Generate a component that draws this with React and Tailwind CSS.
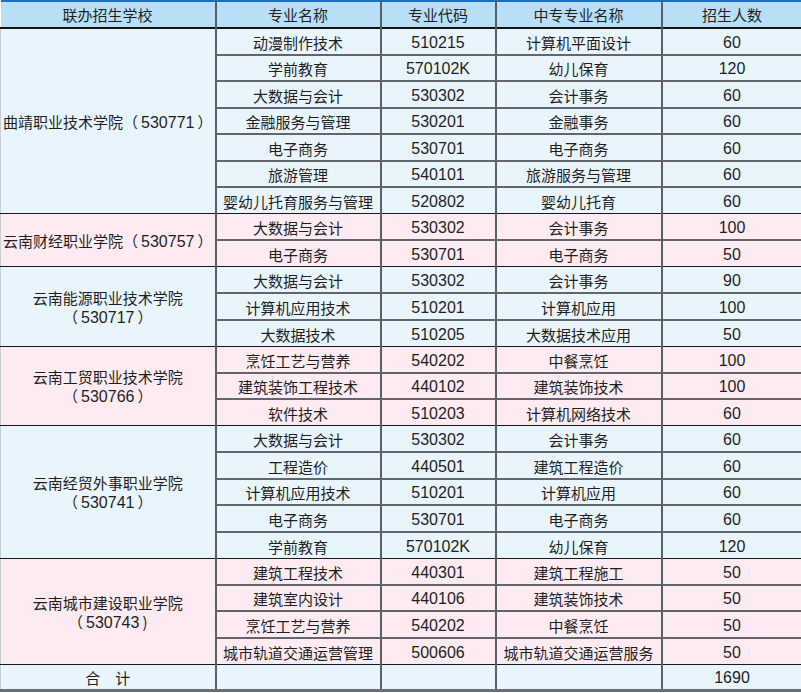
import React from "react";

const schools = [
  {
    name: [["曲靖职业技术学院（", "530771", "）"]],
    tone: "blue",
    rows: [
      ["动漫制作技术", "510215", "计算机平面设计", "60"],
      ["学前教育", "570102K", "幼儿保育", "120"],
      ["大数据与会计", "530302", "会计事务", "60"],
      ["金融服务与管理", "530201", "金融事务", "60"],
      ["电子商务", "530701", "电子商务", "60"],
      ["旅游管理", "540101", "旅游服务与管理", "60"],
      ["婴幼儿托育服务与管理", "520802", "婴幼儿托育", "60"],
    ],
  },
  {
    name: [["云南财经职业学院（", "530757", "）"]],
    tone: "pink",
    rows: [
      ["大数据与会计", "530302", "会计事务", "100"],
      ["电子商务", "530701", "电子商务", "50"],
    ],
  },
  {
    name: [["云南能源职业技术学院", "", ""], ["（", "530717", "）"]],
    tone: "blue",
    rows: [
      ["大数据与会计", "530302", "会计事务", "90"],
      ["计算机应用技术", "510201", "计算机应用", "100"],
      ["大数据技术", "510205", "大数据技术应用", "50"],
    ],
  },
  {
    name: [["云南工贸职业技术学院", "", ""], ["（", "530766", "）"]],
    tone: "pink",
    rows: [
      ["烹饪工艺与营养", "540202", "中餐烹饪", "100"],
      ["建筑装饰工程技术", "440102", "建筑装饰技术", "100"],
      ["软件技术", "510203", "计算机网络技术", "60"],
    ],
  },
  {
    name: [["云南经贸外事职业学院", "", ""], ["（", "530741", "）"]],
    tone: "blue",
    rows: [
      ["大数据与会计", "530302", "会计事务", "60"],
      ["工程造价", "440501", "建筑工程造价", "60"],
      ["计算机应用技术", "510201", "计算机应用", "60"],
      ["电子商务", "530701", "电子商务", "60"],
      ["学前教育", "570102K", "幼儿保育", "120"],
    ],
  },
  {
    name: [["云南城市建设职业学院", "", ""], ["（", "530743", ")"]],
    tone: "pink",
    rows: [
      ["建筑工程技术", "440301", "建筑工程施工", "50"],
      ["建筑室内设计", "440106", "建筑装饰技术", "50"],
      ["烹饪工艺与营养", "540202", "中餐烹饪", "50"],
      ["城市轨道交通运营管理", "500606", "城市轨道交通运营服务", "50"],
    ],
  },
];

const cell = "border-l-2 border-l-[#5a5f66] text-center align-middle p-0";
const num = "font-['Liberation_Sans','Noto_Sans',sans-serif] text-[16px]";

export default function App() {
  return (
    <div className="w-[801px] h-[693px] bg-white overflow-hidden text-[15px] text-[#1f1f1f] font-['Noto_Sans_CJK_SC','Noto_Sans',sans-serif] leading-[19px]">
      <table className="w-[801px] table-fixed border-collapse border-t-2 border-t-[#1a6fc4]">
        <colgroup>
          <col className="w-[215px]" />
          <col className="w-[165px]" />
          <col className="w-[115px]" />
          <col className="w-[166px]" />
          <col className="w-[140px]" />
        </colgroup>
        <thead>
          <tr className="h-[27px] bg-[#b9dff7] border-b-2 border-b-[#111]">
            <th className="font-normal text-center p-0">联办招生学校</th>
            <th className={`${cell} font-normal`}>专业名称</th>
            <th className={`${cell} font-normal`}>专业代码</th>
            <th className={`${cell} font-normal`}>中专专业名称</th>
            <th className={`${cell} font-normal`}>招生人数</th>
          </tr>
        </thead>
        <tbody>
          {schools.map((s, si) => {
            const bg = s.tone === "blue" ? "bg-[#e9f5fd]" : "bg-[#fdebf1]";
            return s.rows.map((r, ri) => {
              const last = ri === s.rows.length - 1;
              const line = last
                ? "border-b border-b-[#1a1a1a]"
                : "border-b-2 border-b-[#62666c]";
              return (
                <tr key={`${si}-${ri}`} className={`h-[26.5px] ${bg}`}>
                  {ri === 0 && (
                    <td
                      rowSpan={s.rows.length}
                      className="text-center align-middle p-0 pt-[2px] border-b border-b-[#1a1a1a] border-l border-l-[#c9ccd0]"
                    >
                      {s.name.map((n) => (
                        <div key={n.join("")}>
                          {n[0]}
                          {n[1] && <span className={`${num} mx-[3px]`}>{n[1]}</span>}
                          {n[2]}
                        </div>
                      ))}
                    </td>
                  )}
                  <td className={`${cell} ${line} pt-[2px]`}>{r[0]}</td>
                  <td className={`${cell} ${line} ${num} pt-[2px]`}>{r[1]}</td>
                  <td className={`${cell} ${line} pt-[2px]`}>{r[2]}</td>
                  <td className={`${cell} ${line} ${num} pt-[2px]`}>{r[3]}</td>
                </tr>
              );
            });
          })}
          <tr className="h-[26.5px] bg-[#e9f5fd] border-b-[3px] border-b-[#6b6e72]">
            <td className="text-center align-middle p-0 pt-[2px] border-l border-l-[#c9ccd0]">合　计</td>
            <td className={cell}></td>
            <td className={cell}></td>
            <td className={cell}></td>
            <td className={`${cell} ${num} pt-[2px]`}>1690</td>
          </tr>
        </tbody>
      </table>
    </div>
  );
}
